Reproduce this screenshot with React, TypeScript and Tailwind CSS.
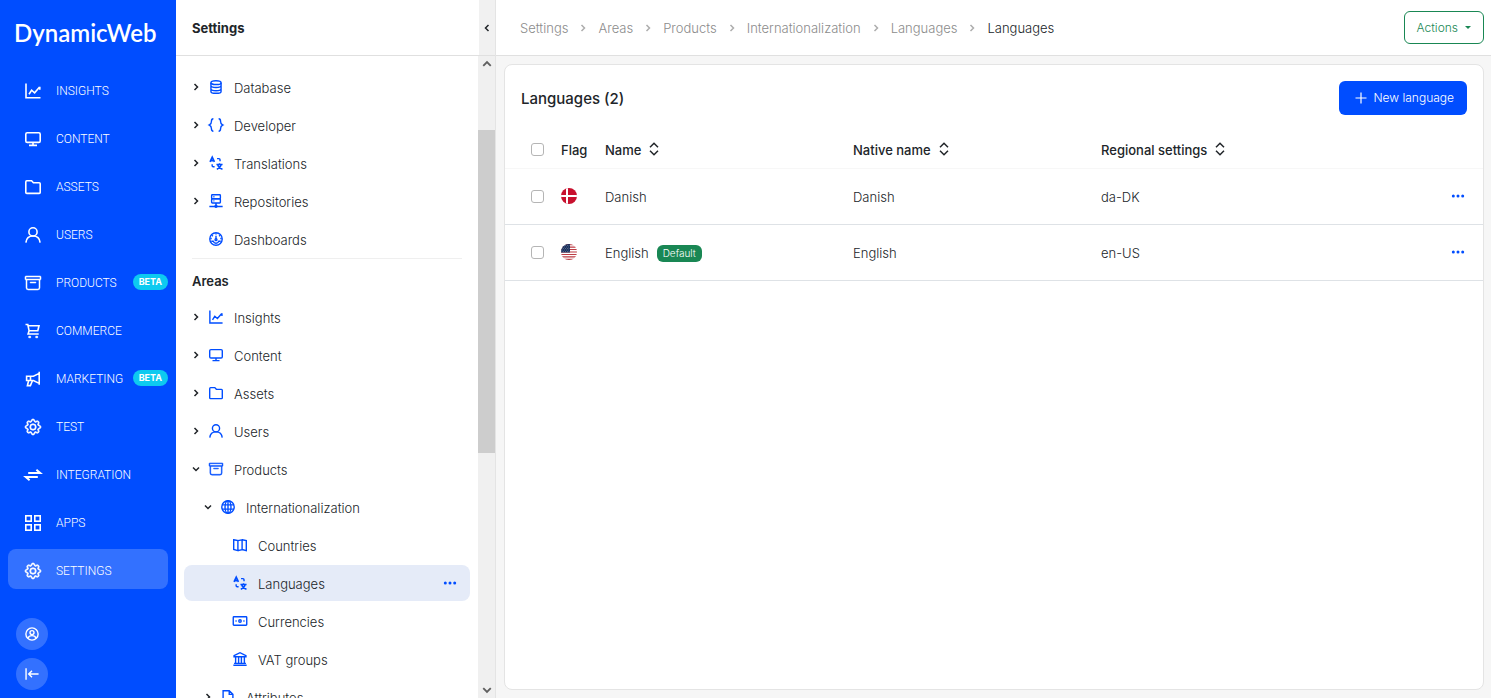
import { ReactNode } from "react";
import { BsArchive, BsGear } from "react-icons/bs";

const icons: Record<string, ReactNode> = {
  insights: (
    <>
      <path d="M1 0.5v14.3h14.5" />
      <path d="M4 11.2l2.6-4 3 2.6L14.6 4M14.8 6.8V3.8" />
    </>
  ),
  content: (
    <>
      <rect x="0.8" y="1.8" width="14.4" height="9.6" rx="1.4" />
      <path d="M8 11.4v2.8M4 14.4h8" />
    </>
  ),
  assets: (
    <path d="M0.8 3v10.4c0 .6.4 1 1 1h12.4c.6 0 1-.4 1-1V4.8c0-.6-.4-1-1-1H8.4L6.6 1.8H1.8c-.6 0-1 .5-1 1.2z" />
  ),
  users: (
    <>
      <circle cx="8" cy="4.9" r="4.1" />
      <path d="M0.9 15.6c.4-4 3-6.600 7.1-6.600s6.700 2.600 7.100 6.600" />
    </>
  ),
  commerce: (
    <>
      <path d="M0.5 1.500h2.300l1.300 6.300h8.700l1.200-5H3.200M4.100 7.800l-1 3.200h10.600" />
      <path d="M3.800 13.300h1.800v1.400H3.800zM10.800 13.300h1.800v1.400h-1.800z" strokeWidth="0.800" fill="currentColor" />
    </>
  ),
  marketing: (
    <>
      <path d="M14.200 0.800v13M14.200 2.400L8.400 5.200H1.600v4.300h6.800l5.800 2.900M5.500 5.200v4.300" />
      <path d="M3.600 9.800l-1.200 4.800h3l2-4.800" />
    </>
  ),
  integration: (
    <>
      <path d="M3.200 6h12L11.400 2.800" />
      <path d="M12.800 10h-12l3.800 3.200" />
    </>
  ),
  apps: (
    <>
      <rect x="0.8" y="0.8" width="5.4" height="5.4" />
      <rect x="9.8" y="0.8" width="5.4" height="5.4" />
      <rect x="0.8" y="9.8" width="5.4" height="5.4" />
      <rect x="9.8" y="9.8" width="5.4" height="5.4" />
    </>
  ),
  profile: (
    <>
      <circle cx="8" cy="8" r="7" />
      <circle cx="8" cy="6.4" r="2.3" />
      <path d="M3.400 12.800c.6-2 2.200-3 4.600-3s4 1 4.600 3" />
    </>
  ),
  collapse: <path d="M1.200 1.500v13M15.500 8H4.500M8 4.200L4.200 8 8 11.800" />,
  database: (
    <>
      <ellipse cx="8" cy="3" rx="5.8" ry="2.2" />
      <path d="M2.200 3v10c0 1.200 2.600 2.200 5.800 2.200s5.800-1 5.800-2.200V3M2.200 6.400c0 1.200 2.600 2.200 5.800 2.200s5.800-1 5.800-2.200M2.200 10c0 1.200 2.600 2.200 5.800 2.200s5.800-1 5.800-2.200" />
    </>
  ),
  developer: (
    <>
      <path d="M5 .8C2.800.8 2.800 2 2.800 3.600S2.800 7 .4 8c2.400 1 2.400 2.800 2.400 4.400S2.800 15.200 5 15.200" />
      <path d="M11 .8c2.200 0 2.200 1.200 2.200 2.800S13.200 7 15.600 8c-2.400 1-2.400 2.800-2.400 4.400s0 2.800-2.200 2.800" />
    </>
  ),
  translations: (
    <>
      <path d="M1.200 6.800L3.700 1.400 6.200 6.800M2 5.200h3.400" strokeWidth="1.900" />
      <path
        d="M8.500 9.600h7M12 8.200v1.400M13.900 9.800c-.6 2.400-2.400 4.400-5 5.400M10 10.200c.8 2.200 2.800 4.200 5.400 5"
        strokeWidth="1.700"
      />
      <path d="M9.200 3h2.200c.8 0 1.200.4 1.200 1.200v1.800M3.600 9.400v1.600c0 .8.400 1.200 1.200 1.200h1.600" />
    </>
  ),
  repositories: (
    <>
      <rect x="3" y="0.8" width="10" height="4.700" rx="0.800" />
      <rect x="3" y="5.500" width="10" height="4.700" rx="0.800" />
      <path d="M5 3.200h1.200M5 7.900h1.200M8 10.200v3M.4 14.200h15.200" />
      <circle cx="8" cy="14" r="1.100" />
    </>
  ),
  dashboards: (
    <>
      <circle cx="8" cy="8" r="7.100" />
      <path d="M8 8.200V4.400M2.600 10.600h2.200c.6 1.400 1.700 2.200 3.200 2.200s2.600-.8 3.200-2.200h2.200M8 1.400v1.400M3.400 3.800l1 1M12.600 3.800l-1 1M1.500 7.500h1.600M14.500 7.500h-1.600" />
      <circle cx="8" cy="8.800" r="1.100" />
    </>
  ),
  globe: (
    <>
      <circle cx="8" cy="8" r="7.100" />
      <ellipse cx="8" cy="8" rx="3.400" ry="7.100" />
      <path d="M8 1v14M1.200 5.600h13.600M1.200 10.400h13.600" />
    </>
  ),
  countries: (
    <path d="M.8 2l4.800 1V14.400L.8 13.200zM5.600 3l4.800-1v11.400l-4.800 1M10.400 2l4.800 1v11.400l-4.800-1.200" />
  ),
  currencies: (
    <>
      <rect x="0.300" y="3.200" width="15.400" height="9.600" rx="0.800" />
      <circle cx="8" cy="8" r="1.400" />
      <path d="M2.800 8h1.400M11.800 8h1.400" />
    </>
  ),
  vat: (
    <path d="M1.200 4.200L8 .8l6.800 3.400v1.200H1.200zM3 5.400v7.600M6.400 5.400v7.600M9.600 5.400v7.600M13 5.400v7.600M1.200 13h13.600M.4 15.200h15.200" />
  ),
  attributes: <path d="M2.400.8h7l4.200 4.200v10.200H2.400zM9.400.8V5h4.200" />,
};

const Icon = ({ name, size = 16 }: { name: string; size?: number }) => {
  if (name === "gear")
    return <BsGear size={size} stroke="currentColor" strokeWidth={0.7} className="overflow-visible" />;
  if (name === "products")
    return <BsArchive size={size} stroke="currentColor" strokeWidth={0.5} className="overflow-visible" />;

  return (
    <svg
      width={size}
      height={size}
      viewBox="0 0 16 16"
      fill="none"
      stroke="currentColor"
      strokeWidth={name === "integration" ? 2 : 1.6}
      className="shrink-0 overflow-visible"
      aria-hidden="true"
    >
      {icons[name]}
    </svg>
  );
};

const Chevron = ({
  direction,
  className = "",
}: {
  direction: "right" | "down" | "left" | "up";
  className?: string;
}) => {
  const paths = {
    right: "M2.500 1L5.500 4l-3 3",
    down: "M1 2.500L4 5.500l3-3",
    left: "M5.500 1L2.500 4l3 3",
    up: "M1 5.500L4 2.500l3 3",
  };
  return (
    <svg
      width="8"
      height="8"
      viewBox="0 0 8 8"
      fill="none"
      stroke="currentColor"
      strokeWidth="1.500"
      className={`shrink-0 ${className}`}
      aria-hidden="true"
    >
      <path d={paths[direction]} />
    </svg>
  );
};

const Dots = () => (
  <svg width="14" height="4" viewBox="0 0 14 4" fill="currentColor" aria-hidden="true">
    <circle cx="2.300" cy="2" r="1.500" />
    <circle cx="7" cy="2" r="1.500" />
    <circle cx="11.700" cy="2" r="1.500" />
  </svg>
);

const menu = [
  { label: "INSIGHTS", icon: "insights" },
  { label: "CONTENT", icon: "content" },
  { label: "ASSETS", icon: "assets" },
  { label: "USERS", icon: "users" },
  { label: "PRODUCTS", icon: "products", beta: true },
  { label: "COMMERCE", icon: "commerce" },
  { label: "MARKETING", icon: "marketing", beta: true },
  { label: "TEST", icon: "gear" },
  { label: "INTEGRATION", icon: "integration" },
  { label: "APPS", icon: "apps" },
  { label: "SETTINGS", icon: "gear", active: true },
];

const Sidebar = () => (
  <nav className="flex w-44 shrink-0 flex-col justify-between bg-[#004dff] px-2 pb-2 text-white">
    <div>
      <a
        href="#"
        className="mb-1 flex h-[65px] items-center pl-[6px] font-['Lato'] text-2xl font-semibold"
      >
        DynamicWeb
      </a>
      <ul className="flex flex-col gap-2">
        {menu.map((item) => (
          <li key={item.label}>
            <a
              href="#"
              className={`flex h-10 items-center rounded-lg pt-[3px] pl-[17px] font-['Roboto'] text-xs ${
                item.active ? "bg-[#3371ff]" : ""
              }`}
            >
              <Icon name={item.icon} />
              <span className="ml-[15px]">{item.label}</span>
              {item.beta && (
                <span className="mb-[2px] ml-auto rounded-full bg-[#0dcaf0] px-[6px] font-['Inter'] text-[9px] leading-4 font-bold">
                  BETA
                </span>
              )}
            </a>
          </li>
        ))}
      </ul>
    </div>
    <div className="flex flex-col gap-2 pl-2">
      <button
        aria-label="Profile"
        className="flex size-8 items-center justify-center rounded-full bg-[#3371ff]"
      >
        <Icon name="profile" size={14} />
      </button>
      <button
        aria-label="Collapse menu"
        className="flex size-8 items-center justify-center rounded-full bg-[#3371ff]"
      >
        <Icon name="collapse" size={14} />
      </button>
    </div>
  </nav>
);

interface ITreeNode {
  label: string;
  icon: string;
  level?: number;
  state?: "open" | "closed";
  selected?: boolean;
}

const settingsNodes: ITreeNode[] = [
  { label: "Database", icon: "database", state: "closed" },
  { label: "Developer", icon: "developer", state: "closed" },
  { label: "Translations", icon: "translations", state: "closed" },
  { label: "Repositories", icon: "repositories", state: "closed" },
  { label: "Dashboards", icon: "dashboards" },
];

const areaNodes: ITreeNode[] = [
  { label: "Insights", icon: "insights", state: "closed" },
  { label: "Content", icon: "content", state: "closed" },
  { label: "Assets", icon: "assets", state: "closed" },
  { label: "Users", icon: "users", state: "closed" },
  { label: "Products", icon: "products", state: "open" },
  { label: "Internationalization", icon: "globe", level: 1, state: "open" },
  { label: "Countries", icon: "countries", level: 2 },
  { label: "Languages", icon: "translations", level: 2, selected: true },
  { label: "Currencies", icon: "currencies", level: 2 },
  { label: "VAT groups", icon: "vat", level: 2 },
  { label: "Attributes", icon: "attributes", level: 1, state: "closed" },
];

const indents = ["pl-2", "pl-5", "pl-8"];

const TreeNode = ({ node }: { node: ITreeNode }) => (
  <li
    className={`flex h-9 items-center rounded-lg pr-[13px] ${indents[node.level ?? 0]} ${
      node.selected ? "bg-[#e5ebf8]" : ""
    }`}
  >
    <a href="#" className="flex flex-1 items-center">
      <span className="flex w-4">
        {node.state && (
          <Chevron direction={node.state === "open" ? "down" : "right"} />
        )}
      </span>
      <span className="flex w-[26px] pl-px text-[#004dff]">
        <Icon name={node.icon} size={14} />
      </span>
      <span className="pt-px">{node.label}</span>
    </a>
    {node.selected && (
      <button aria-label="More" className="text-[#004dff]">
        <Dots />
      </button>
    )}
  </li>
);

const TreePanel = () => (
  <aside className="flex w-80 shrink-0 flex-col border-r border-[#e4e4e4] bg-white">
    <header className="flex h-14 shrink-0 border-b border-[#e0e0e0]">
      <h2 className="flex-1 self-center pl-4 text-[13px] font-bold">Settings</h2>
      <button
        aria-label="Hide panel"
        className="flex w-4 items-center justify-center bg-[#f1f1f1]"
      >
        <Chevron direction="left" />
      </button>
    </header>
    <div className="flex min-h-0 flex-1">
      <div className="flex-1 overflow-hidden pt-[13px] pr-2 pl-2">
        <ul className="flex flex-col gap-[2px] pb-px">
          {settingsNodes.map((node) => (
            <TreeNode key={node.label} node={node} />
          ))}
        </ul>
        <hr className="mx-2 border-[#efefef]" />
        <h3 className="py-3 pl-2 text-[13px] leading-5 font-semibold">Areas</h3>
        <ul className="-mt-1 flex flex-col gap-[2px]">
          {areaNodes.map((node) => (
            <TreeNode key={node.label} node={node} />
          ))}
        </ul>
      </div>
      <div className="flex w-[17px] flex-col items-center bg-[#f0f0f0] text-[#606060]">
        <div className="flex h-[74px] shrink-0 pt-[3px]">
          <Chevron direction="up" className="size-[10px]" />
        </div>
        <div className="h-[323px] w-full bg-[#cdcdcd]" />
        <div className="mt-auto pb-[3px]">
          <Chevron direction="down" className="size-[10px]" />
        </div>
      </div>
    </div>
  </aside>
);

const crumbs = ["Settings", "Areas", "Products", "Internationalization", "Languages"];

const Breadcrumbs = () => (
  <ol className="flex items-center text-[#8c8c8c]">
    {crumbs.map((crumb) => (
      <li key={crumb} className="flex items-center">
        <a href="#">{crumb}</a>
        <Chevron direction="right" className="mr-[11px] ml-[11px] opacity-70" />
      </li>
    ))}
    <li className="text-[#212529]">Languages</li>
  </ol>
);

const DanishFlag = () => (
  <svg width="16" height="16" viewBox="0 0 16 16" role="img" aria-label="Denmark">
    <clipPath id="dk">
      <circle cx="8" cy="8" r="8" />
    </clipPath>
    <g clipPath="url(#dk)">
      <path fill="#c8102e" d="M0 0h16v16H0z" />
      <path fill="#fff" d="M5 0h2v16H5zM0 7h16v2H0z" />
    </g>
  </svg>
);

const AmericanFlag = () => (
  <svg width="16" height="16" viewBox="0 0 16 16" role="img" aria-label="United States">
    <clipPath id="us">
      <circle cx="8" cy="8" r="8" />
    </clipPath>
    <g clipPath="url(#us)">
      <path fill="#fff" d="M0 0h16v16H0z" />
      <path
        stroke="#bd3d44"
        strokeWidth="1.230"
        d="M0 .6h16M0 3.100h16M0 5.500h16M0 8h16M0 10.500h16M0 12.900h16M0 15.400h16"
      />
      <path fill="#192f5d" d="M0 0h9v8.600H0z" />
      <path
        stroke="#fff"
        strokeWidth="0.600"
        strokeDasharray="0.600 1.200"
        d="M.6 1.500h8M1.500 3h7M.6 4.500h8M1.500 6h7M.6 7.500h8"
        opacity="0.700"
      />
    </g>
  </svg>
);

const languages = [
  { name: "Danish", locale: "da-DK", flag: <DanishFlag />, isDefault: false },
  { name: "English", locale: "en-US", flag: <AmericanFlag />, isDefault: true },
];

const Checkbox = ({ label }: { label: string }) => (
  <input
    type="checkbox"
    aria-label={label}
    className="block size-[13px] appearance-none rounded-[3px] border border-[#b5b5b5] bg-white"
  />
);

const SortHeader = ({ label }: { label: string }) => (
  <th className="px-2 font-medium">
    <button className="flex items-center gap-2">
      <span className="pt-px">{label}</span>
      <svg
        width="10"
        height="14"
        viewBox="0 0 10 14"
        fill="none"
        stroke="currentColor"
        strokeWidth="1.500"
        aria-hidden="true"
      >
        <path d="M1 5.200l4-4 4 4M1 8.800l4 4 4-4" />
      </svg>
    </button>
  </th>
);

const LanguagesTable = () => (
  <table className="w-full table-fixed text-left">
    <thead>
      <tr className="h-[37px] border-b border-[#f7f7f7]">
        <th className="w-12 pl-[26px]">
          <Checkbox label="Select all" />
        </th>
        <th className="w-11 pt-px pl-2 font-medium">Flag</th>
        <SortHeader label="Name" />
        <SortHeader label="Native name" />
        <SortHeader label="Regional settings" />
        <th className="w-[142px]" aria-label="Row actions" />
      </tr>
    </thead>
    <tbody>
      {languages.map((language) => (
        <tr key={language.name} className="h-14 border-b border-[#dee2e6]">
          <td className="pl-[26px]">
            <Checkbox label={`Select ${language.name}`} />
          </td>
          <td className="pl-2">{language.flag}</td>
          <td className="px-2 pt-[2px]">
            <span className="flex items-center gap-2">
              {language.name}
              {language.isDefault && (
                <span className="rounded-md bg-[#198754] px-[6px] text-[10px] leading-[17px] text-white">
                  Default
                </span>
              )}
            </span>
          </td>
          <td className="px-2 pt-[2px]">{language.name}</td>
          <td className="px-2 pt-[2px]">{language.locale}</td>
          <td className="pr-[18px]">
            <button aria-label="More" className="ml-auto block text-[#004dff]">
              <Dots />
            </button>
          </td>
        </tr>
      ))}
    </tbody>
  </table>
);

const App = () => {
  return (
    <div className="flex h-screen overflow-hidden bg-[#f6f6f6] font-['Inter',sans-serif] text-[13px] leading-5 font-light text-[#212529]">
      <Sidebar />
      <TreePanel />
      <main className="flex min-w-0 flex-1 flex-col">
        <header className="flex h-14 shrink-0 items-center justify-between border-b border-[#e0e0e0] bg-white pr-[7px] pl-6">
          <Breadcrumbs />
          <button className="flex h-[33px] items-center gap-[7px] rounded-md border border-[#198754] px-3 text-xs text-[#198754]">
            Actions
            <svg width="6" height="3" viewBox="0 0 6 3" fill="currentColor" aria-hidden="true">
              <path d="M0 0h6L3 3z" />
            </svg>
          </button>
        </header>
        <section className="mt-2 mr-[7px] mb-2 ml-2 flex-1 rounded-lg border border-[#e4e4e4] bg-white">
          <div className="flex items-center justify-between p-4">
            <h1 className="pt-px text-[15px] font-medium">Languages (2)</h1>
            <button className="flex h-[34px] items-center gap-[6px] rounded-md bg-[#004dff] pr-[13px] pl-4 text-xs text-white">
              <svg
                width="12"
                height="12"
                viewBox="0 0 12 12"
                stroke="currentColor"
                strokeWidth="1.200"
                aria-hidden="true"
              >
                <path d="M6 .5v11M.5 6h11" />
              </svg>
              New language
            </button>
          </div>
          <LanguagesTable />
        </section>
      </main>
    </div>
  );
};

export default App;
